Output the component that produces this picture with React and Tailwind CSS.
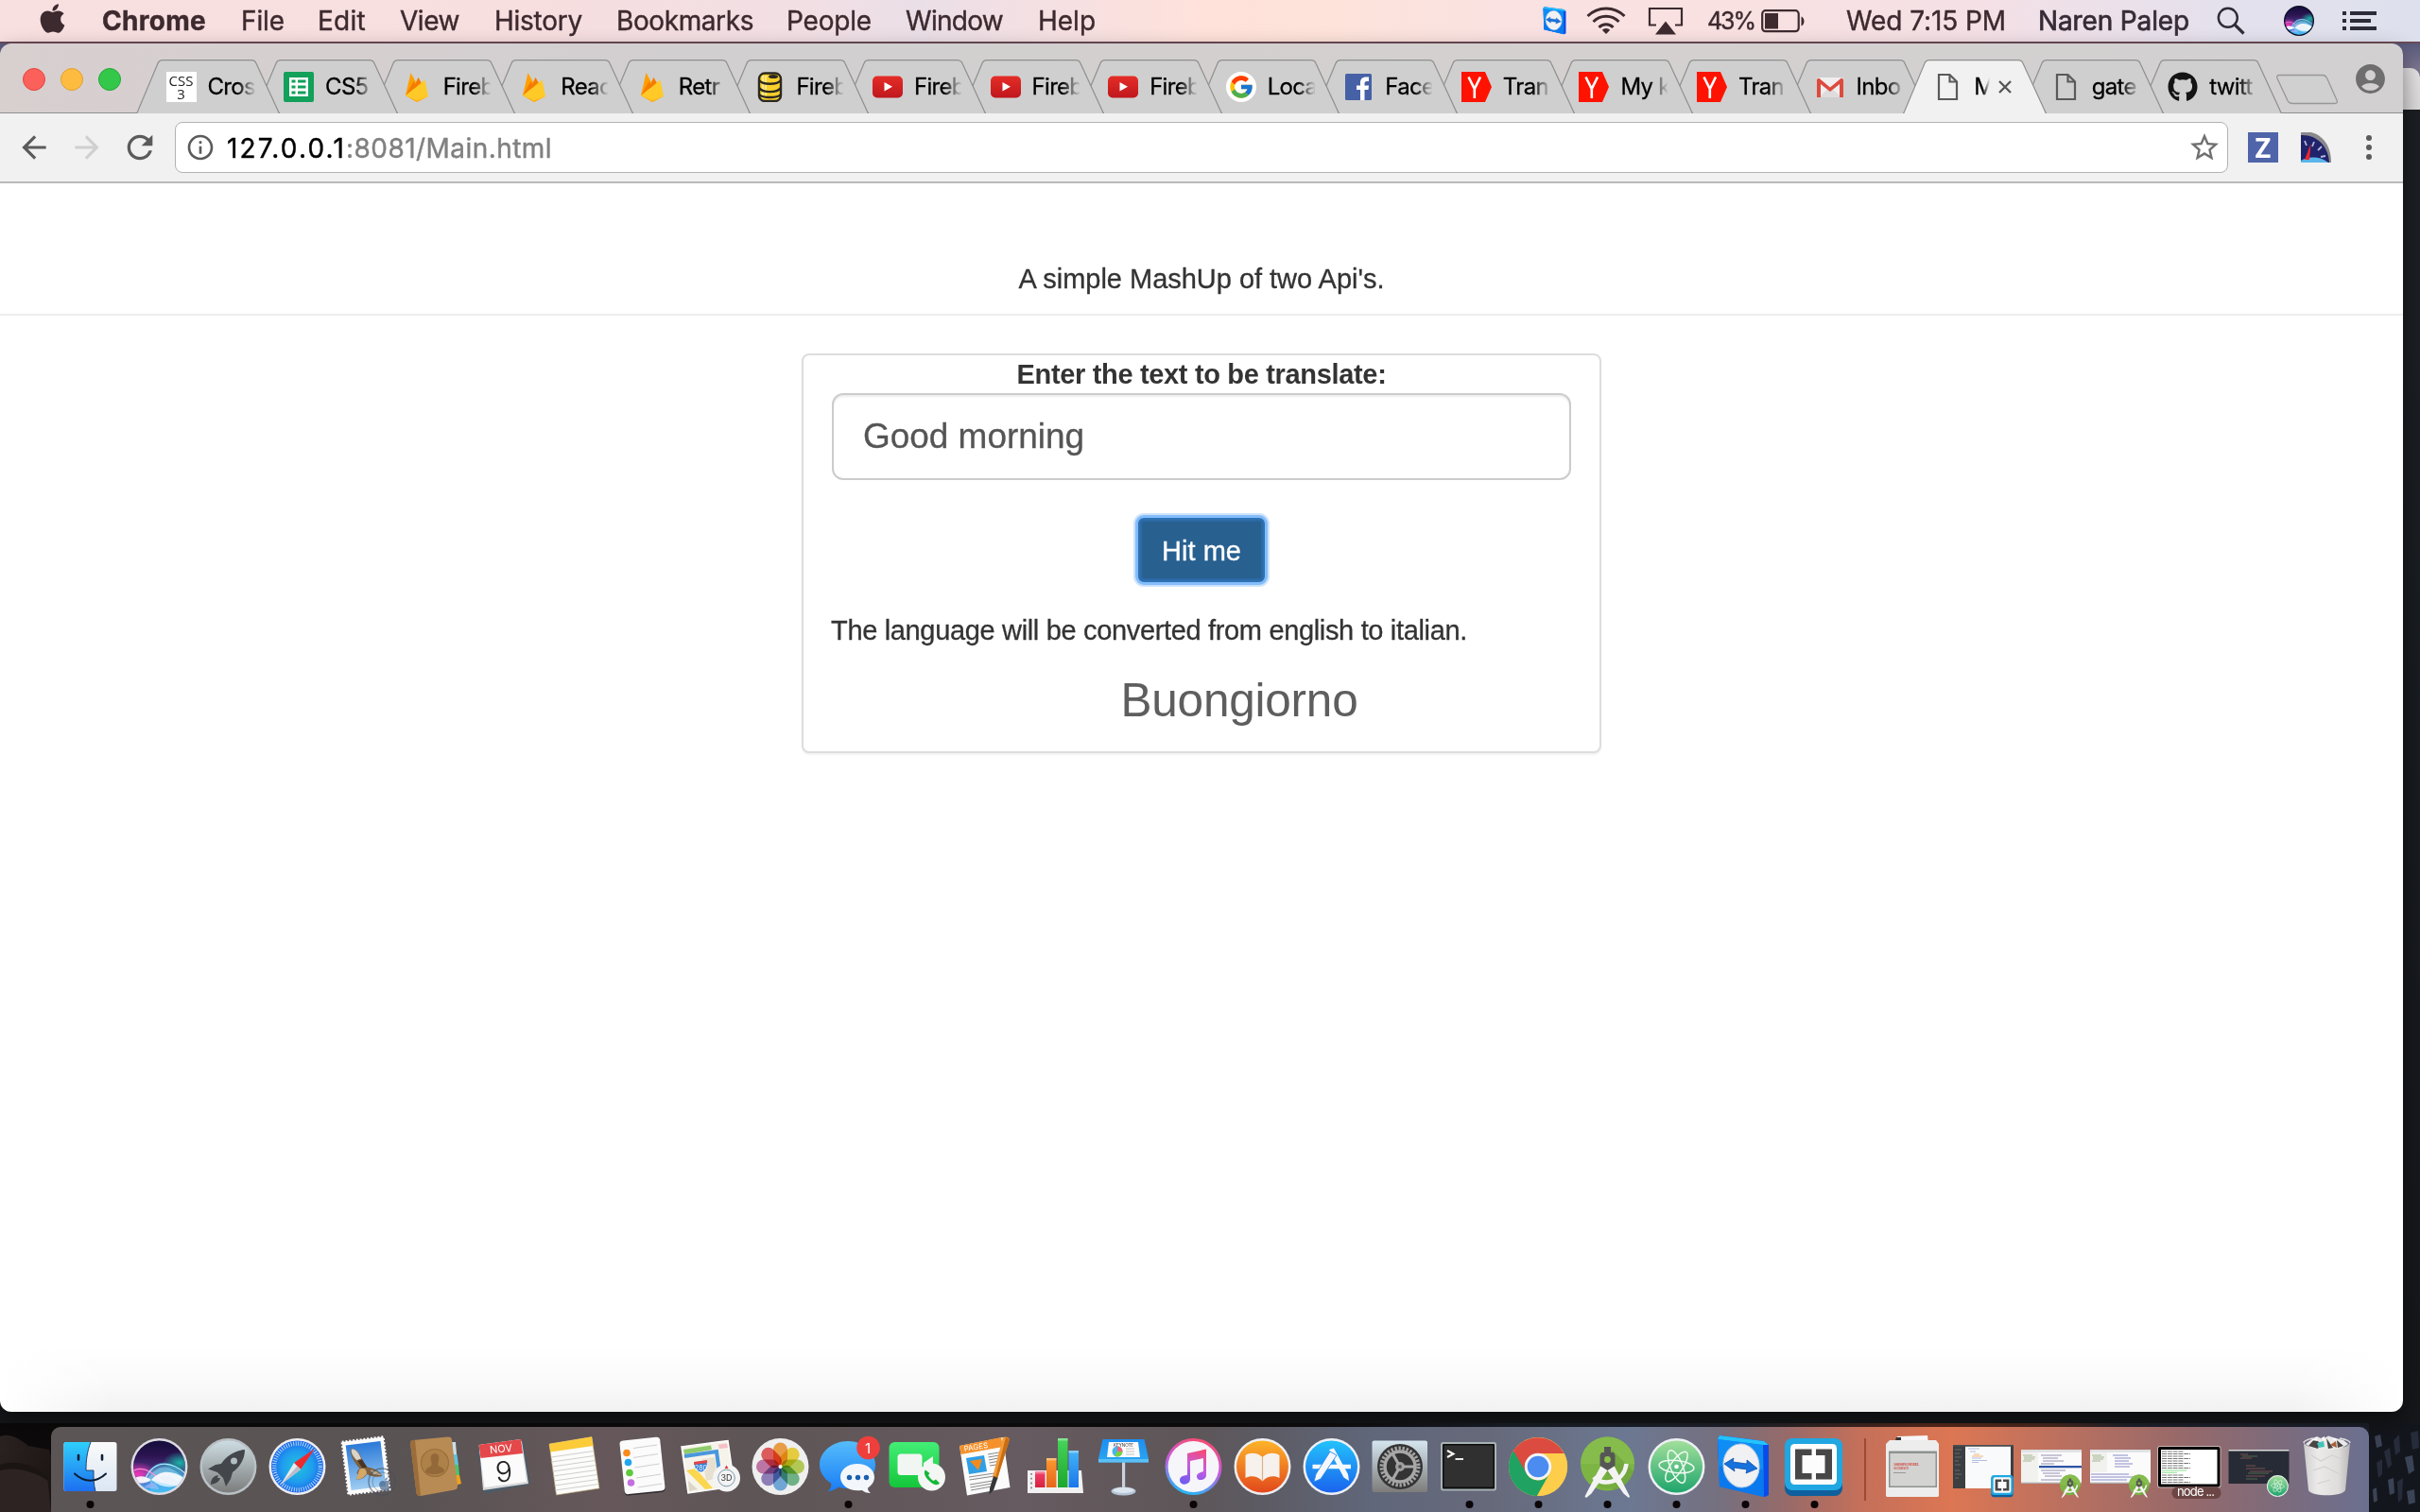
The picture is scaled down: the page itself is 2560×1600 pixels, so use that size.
import React, { useLayoutEffect, useRef } from "react";
import { FaApple, FaGithub } from "react-icons/fa";
import { FcGoogle } from "react-icons/fc";
import { MdAccountCircle, MdStarBorder, MdRefresh, MdArrowBack, MdArrowForward, MdInfoOutline } from "react-icons/md";

/* Text that is tracked so that it fills the given width. */
function Fit({ w, className = "", children }) {
  const ref = useRef(null);
  useLayoutEffect(() => {
    const el = ref.current;
    el.style.letterSpacing = "0px";
    const natural = el.getBoundingClientRect().width;
    el.style.letterSpacing = `${(w - natural) / String(children).length}px`;
  }, [w, children]);
  return (
    <span ref={ref} className={`inline-block shrink-0 whitespace-pre ${className}`}>
      {children}
    </span>
  );
}

/* ---------- menu bar ---------- */

const menus = [
  ["File", 46, "ml-[37px]"],
  ["Edit", 51, "ml-[35px]"],
  ["View", 63, "ml-[36px]"],
  ["History", 93, "ml-[37px]"],
  ["Bookmarks", 145, "ml-[36px]"],
  ["People", 90, "ml-[35px]"],
  ["Window", 103, "ml-[36px]"],
  ["Help", 61, "ml-[37px]"],
];

function TeamViewerShape() {
  return (
    <g>
      <path d="M7 13 L9 9 L56 15 L61 19 L61 72 L57 74 L9 63 Z" fill="#0a4be8" />
      <path d="M7 13 L55 19 L56 74 L9 63 Z" fill="#0f8df5" />
      <path d="M7 13 L9 9 L56 15 L61 19 L55 19 Z" fill="#22c3ff" />
      <path d="M9 42 C25 36 40 40 56 46 L56 74 L9 63 Z" fill="#0a6ae8" opacity="0.55" />
      <ellipse cx="32" cy="41" rx="19" ry="23" fill="#f1f1f4" stroke="#bcd" strokeWidth="1" transform="rotate(-6 32 41)" />
      <path d="M14 39 L24 33 L23 37 L38 39 L38 35 L49 44 L37 49 L38 45 L24 43 L25 47 Z" fill="#1672dc" stroke="#0b4fae" strokeWidth="0.8" />
    </g>
  );
}

function SiriOrb({ id }) {
  return (
    <g>
      <defs>
        <linearGradient id={`${id}bg`} x1="0" y1="0" x2="0" y2="1">
          <stop offset="0" stopColor="#140d3a" />
          <stop offset="0.3" stopColor="#2c1552" />
          <stop offset="0.55" stopColor="#4a2f7e" />
          <stop offset="0.75" stopColor="#3f7fd0" />
          <stop offset="1" stopColor="#2fb0ee" />
        </linearGradient>
        <radialGradient id={`${id}p`}>
          <stop offset="0" stopColor="#f531b4" />
          <stop offset="1" stopColor="#f531b4" stopOpacity="0" />
        </radialGradient>
        <radialGradient id={`${id}t`}>
          <stop offset="0" stopColor="#19b3a6" />
          <stop offset="1" stopColor="#19b3a6" stopOpacity="0" />
        </radialGradient>
        <clipPath id={`${id}c`}>
          <circle cx="36.5" cy="42" r="27.5" />
        </clipPath>
      </defs>
      <circle cx="36.5" cy="42" r="27.5" fill={`url(#${id}bg)`} />
      <g clipPath={`url(#${id}c)`}>
        <ellipse cx="58" cy="38" rx="18" ry="12" fill={`url(#${id}t)`} />
        <ellipse cx="14" cy="50" rx="20" ry="13" fill={`url(#${id}p)`} />
        <path d="M20 56 C30 32 50 32 66 54 L66 60 C50 44 34 44 24 60 Z" fill="#4fd4f5" opacity="0.45" />
        <path d="M24 56 C34 38 48 38 64 56 L60 62 C48 48 36 50 28 60 Z" fill="#8be6fb" opacity="0.5" />
        <path d="M8 47 C18 40 30 48 40 58" stroke="#ff8fd6" strokeWidth="1.2" fill="none" />
        <path d="M22 54 C32 34 50 36 65 50" stroke="#a8f4ff" strokeWidth="1.2" fill="none" />
        <path d="M8 56 C14 50 22 52 28 56 C38 44 52 46 66 56 C54 66 40 66 28 56 C22 60 14 61 8 56 Z" fill="#fff" opacity="0.9" />
        <path d="M20 64 C28 58 32 56 36 66 Z" fill="#c9b4ff" opacity="0.6" />
        <path d="M28 56 C40 60 50 62 60 62 L50 72 H26 Z" fill="#6fd8ff" opacity="0.35" />
      </g>
    </g>
  );
}

function MenuBar() {
  return (
    <header className="flex h-[46px] items-start border-b-2 border-[#6b4b56] bg-[linear-gradient(90deg,#f8dfe0_0%,#f7dedf_22%,#f2dfe4_33%,#ebdfe7_38%,#f6e0e2_44%,#ffe2da_50%,#fde3da_55%,#f9e2e1_62%,#f9e1e1_72%,#f4e0e6_82%,#e4e1ed_92%,#dde1ed_100%)] text-[28px] leading-[44px] text-[#3d2a2f] [-webkit-text-stroke:0.4px]">
      <FaApple className="mt-[2px] ml-[38px] h-[35px] w-[35px] shrink-0" />
      <Fit w={110} className="ml-[35px] font-bold">Chrome</Fit>
      {menus.map(([name, w, ml]) => (
        <Fit key={name} w={w} className={ml}>{name}</Fit>
      ))}
      <div className="ml-auto flex h-[44px] items-center">
        <svg className="h-[32px] w-[27px]" viewBox="4 6 60 72"><TeamViewerShape /></svg>
        <svg className="ml-[20px] h-[32px] w-[42px]" viewBox="0 0 42 32" fill="none" stroke="#3d2a2f" strokeWidth="3">
          <path d="M1.5 11 A27.5 27.5 0 0 1 40.5 11" />
          <path d="M7.5 17 A19 19 0 0 1 34.5 17" />
          <path d="M13.5 23 A10.5 10.5 0 0 1 28.5 23" />
          <path d="M21 30 L16.8 25.7 A6 6 0 0 1 25.2 25.7 Z" fill="#3d2a2f" stroke="none" />
        </svg>
        <svg className="ml-[23px] h-[30px] w-[38px]" viewBox="0 0 38 30">
          <path d="M9 19.5 H2 V2 H36 V19.5 H29" fill="none" stroke="#3d2a2f" strokeWidth="2.2" />
          <path d="M19 15.5 L30 29.5 H8 Z" fill="#3d2a2f" />
        </svg>
        <Fit w={50} className="ml-[25px] text-[25px]">43%</Fit>
        <svg className="ml-[7px] h-[26px] w-[47px]" viewBox="0 0 47 26">
          <rect x="1.2" y="2.2" width="38.5" height="22" rx="3.5" fill="none" stroke="#3d2a2f" strokeWidth="2.2" />
          <rect x="4" y="5" width="14" height="16.5" fill="#3d2a2f" />
          <path d="M42.5 8.5 C46.500 10 46.500 17 42.500 18.500 Z" fill="#3d2a2f" />
        </svg>
        <Fit w={169} className="ml-[43px]">Wed 7:15 PM</Fit>
        <Fit w={160} className="ml-[34px] text-[#362c37] [-webkit-text-stroke:0.7px]">Naren Palep</Fit>
        <svg className="ml-[29px] h-[30px] w-[30px]" viewBox="0 0 30 30" fill="none" stroke="#2f2c38">
          <circle cx="11.8" cy="11.8" r="10" strokeWidth="2.4" />
          <path d="M18.8 18.8 L28.5 28.5" strokeWidth="3.2" />
        </svg>
        <svg className="ml-[41px] h-[32px] w-[32px]" viewBox="6.5 12 60 60">
          <circle cx="36.5" cy="42" r="30" fill="#0a0f24" />
          <SiriOrb id="ms" />
        </svg>
        <svg className="mr-[46px] ml-[30px] h-[20px] w-[36px]" viewBox="0 0 36 20" fill="#2c2b39">
          <path d="M0 0h4v4H0zM0 8h4v4H0zM0 16h4v4H0zM8 0h28v4H8zM8 8h22v4H8zM8 16h28v4H8z" />
        </svg>
      </div>
    </header>
  );
}

/* ---------- favicons ---------- */

const box = "h-[32px] w-[32px] shrink-0";

function CssIcon() {
  return (
    <div className="flex h-[32px] w-[32px] shrink-0 flex-col items-center justify-center bg-white font-['Open_Sans'] text-[15px] leading-[14px] text-[#222]">
      <span>CSS</span>
      <span>3</span>
    </div>
  );
}
function SheetIcon() {
  return (
    <svg className={box} viewBox="0 0 32 32">
      <rect width="32" height="32" rx="2" fill="#12a05a" />
      <path d="M6 6h20v20H6z" fill="#fff" />
      <path d="M8.5 8.5h4v3h-4zM15 8.5h8.5v3H15zM8.5 14.5h4v3h-4zM15 14.5h8.5v3H15zM8.5 20.5h4v3h-4zM15 20.5h8.5v3H15z" fill="#12a05a" />
    </svg>
  );
}
function FireIcon() {
  return (
    <svg className={box} viewBox="0 0 32 32">
      <path d="M4 25 L9.5 1 L15 11 L17.5 6 L21 12 L8 26 Z" fill="#ffa000" />
      <path d="M4 25 L12.5 10 L17 17 Z" fill="#f57c00" />
      <path d="M4 25 L24.5 8.5 L28 26 L16 32 Z" fill="#ffca28" />
      <path d="M4 25 L16 32 L28 26 L16 30.5 Z" fill="#ffa712" />
      <path d="M17.5 6 L20.5 11.8 L12 18.5 Z" fill="#f57c00" />
    </svg>
  );
}
function DbIcon() {
  return (
    <svg className={box} viewBox="0 0 32 32">
      <rect x="5" y="1.5" width="23" height="29.5" rx="6" fill="#f9cf2c" stroke="#2b2920" strokeWidth="2.4" />
      <path d="M9 4v24M12 4v24" stroke="#fde98a" strokeWidth="2" />
      <path d="M5 9 C9 14 24 14 28 9 M5 17 C9 22.5 24 22.5 28 17 M5 24 C9 28 24 28 28 24" fill="none" stroke="#2b2920" strokeWidth="2.4" />
      <ellipse cx="20" cy="5" rx="5" ry="2" fill="#2b2920" />
    </svg>
  );
}
function YtIcon() {
  return (
    <svg className={box} viewBox="0 0 32 32">
      <defs>
        <linearGradient id="ytg" x1="0" y1="0" x2="0" y2="1">
          <stop offset="0" stopColor="#e52d27" />
          <stop offset="1" stopColor="#bf171d" />
        </linearGradient>
      </defs>
      <rect x="0" y="4.5" width="32" height="23" rx="5" fill="url(#ytg)" />
      <path d="M12.5 11 L21 15.7 L12.5 20.5 Z" fill="#fff" />
    </svg>
  );
}
function GoogleIcon() {
  return (
    <div className="flex h-[32px] w-[32px] shrink-0 items-center justify-center rounded-full bg-white">
      <FcGoogle className="h-[28px] w-[28px]" />
    </div>
  );
}
function FbIcon() {
  return (
    <svg className={box} viewBox="0 0 32 32">
      <rect x="2" y="2" width="28" height="28" rx="1.5" fill="#4661a5" />
      <path d="M18 30 V19 H14 V14.5 H18 V11.5 C18 7.5 20.5 5.5 24 5.5 H27 V10 H25 C23 10 22.5 11 22.5 12.5 V14.5 H27 L26.5 19 H22.5 V30 Z" fill="#fff" />
    </svg>
  );
}
function YIcon() {
  return (
    <svg className={box} viewBox="0 0 32 32">
      <path d="M0 0 H25 L32 16 L25 32 H0 Z" fill="#ff1300" />
      <path d="M7.5 5.5 L13.8 18 L20 5.5 M13.8 17 V28" stroke="#fff" strokeWidth="2.6" fill="none" />
    </svg>
  );
}
function GmailIcon() {
  return (
    <svg className={box} viewBox="0 0 32 32">
      <rect x="2" y="6" width="28" height="21" rx="1.5" fill="#f0eeee" />
      <path d="M4 27 L16 16 L28 27 Z" fill="#dedcdc" />
      <path d="M2 27 V8 L4 6.5 L16 16.5 L28 6.5 L30 8 V27 H26 V13 L16 21 L6 13 V27 Z" fill="#dd4b3e" />
    </svg>
  );
}
function FileIcon() {
  return (
    <svg className={box} viewBox="0 0 32 32" fill="none" stroke="#5a5a5a" strokeWidth="2.2">
      <path d="M7 3 H18.5 L26 10.5 V29 H7 Z" />
      <path d="M18.5 3 V10.5 H26" />
    </svg>
  );
}
function HubIcon() {
  return <FaGithub className="h-[32px] w-[32px] shrink-0 text-[#141414]" />;
}

const tabs = [
  [CssIcon, "Cross"],
  [SheetIcon, "CS5"],
  [FireIcon, "Fireb"],
  [FireIcon, "Reac"],
  [FireIcon, "Retr"],
  [DbIcon, "Fireb"],
  [YtIcon, "Fireb"],
  [YtIcon, "Fireb"],
  [YtIcon, "Fireb"],
  [GoogleIcon, "Loca"],
  [FbIcon, "Face"],
  [YIcon, "Tran"],
  [YIcon, "My k"],
  [YIcon, "Tran"],
  [GmailIcon, "Inbo"],
  [FileIcon, "M", true],
  [FileIcon, "gate"],
  [HubIcon, "twitt"],
];

function Tab({ Icon, title, active, z }) {
  return (
    <div className="relative mr-[-27.43px] h-[57px] w-[152px] shrink-0" style={{ zIndex: z }}>
      <svg className="absolute inset-0 h-[57px] w-[152px]" viewBox="0 0 152 57">
        <path
          d="M0 57 C1.5 56.5 1.5 55 2 54 L23 4 C24 1.5 25 0.7 28 0.7 H122 C125 0.7 126 1.5 127 4 L150 54 C150.5 55.5 151 56.5 152 57"
          fill={active ? "#f1f1f1" : "#cfcfcf"}
          stroke="#8f8f8f"
          strokeWidth="1.2"
        />
      </svg>
      <div className="relative flex h-[57px] items-center pl-[31.5px]">
        <Icon />
        <span
          className={`ml-[12px] overflow-hidden text-[24px] leading-[34px] tracking-[-0.7px] whitespace-nowrap text-black [-webkit-text-stroke:0.3px] ${
            active
              ? "w-[17px] [mask-image:linear-gradient(90deg,#000_55%,transparent_100%)]"
              : "w-[50px] [mask-image:linear-gradient(90deg,#000_62%,transparent_102%)]"
          }`}
        >
          {title}
        </span>
        {active && (
          <svg className="ml-[9px] h-[14px] w-[14px]" viewBox="0 0 14 14" stroke="#555" strokeWidth="2.3">
            <path d="M1 1 L13 13 M13 1 L1 13" />
          </svg>
        )}
      </div>
    </div>
  );
}

function TabStrip() {
  return (
    <div className="flex h-[74px] items-end rounded-t-[12px] bg-[linear-gradient(90deg,#d8cfcf_0%,#d6cfd0_10%,#d1cfd0_35%,#d3cfce_50%,#d5d0d0_60%,#d2d0d1_100%)] shadow-[inset_0_-1px_0_#8f8f8f]">
      <div className="flex w-[144px] shrink-0 gap-[16px] self-center pt-[2px] pl-[24px]">
        <i className="h-[24px] w-[24px] rounded-full border border-[#e2463f] bg-[#fc605b]" />
        <i className="h-[24px] w-[24px] rounded-full border border-[#e0a030] bg-[#fdbc40]" />
        <i className="h-[24px] w-[24px] rounded-full border border-[#24a737] bg-[#34c84a]" />
      </div>
      <div className="isolate flex">
        {tabs.map(([Icon, title, active], i) => (
          <Tab key={i} Icon={Icon} title={title} active={active} z={active ? 50 : 30 - i} />
        ))}
      </div>
      <svg className="mb-[8px] ml-[21px] h-[34px] w-[67px] shrink-0" viewBox="0 0 67 34">
        <path d="M4 1.5 H50 C52.5 1.5 53.5 2.5 54.5 4.5 L65 28 C66 30.5 65 31.5 63 31.5 H18 C15.5 31.5 14 30.5 13 28.5 L2 5 C1 2.5 2 1.5 4 1.5 Z" fill="#d0d0d0" stroke="#979797" strokeWidth="1.3" />
      </svg>
      <MdAccountCircle className="mr-[16px] ml-auto h-[37px] w-[37px] self-center text-[#6e6e6e]" />
    </div>
  );
}

function Toolbar() {
  return (
    <div className="flex h-[74px] items-center border-b-2 border-[#b9b9b9] bg-[#f1f1f1]">
      <MdArrowBack className="ml-[17px] h-[38px] w-[38px] shrink-0 text-[#5b5b5b]" />
      <MdArrowForward className="ml-[18px] h-[38px] w-[38px] shrink-0 text-[#d0d0d0]" />
      <MdRefresh className="ml-[17px] h-[40px] w-[40px] shrink-0 text-[#5b5b5b]" />
      <div className="ml-[17px] flex h-[54px] w-[2172px] shrink-0 items-center rounded-[8px] border border-[#b2b2b2] bg-white text-[28px] leading-[40px]">
        <MdInfoOutline className="ml-[10px] h-[32px] w-[32px] shrink-0 text-[#5b5b5b]" />
        <Fit w={126} className="mt-[2px] ml-[12px] text-black [-webkit-text-stroke:0.4px]">127.0.0.1</Fit>
        <Fit w={218} className="mt-[2px] text-[#808080] [-webkit-text-stroke:0.4px]">:8081/Main.html</Fit>
        <MdStarBorder className="mr-[6px] ml-auto h-[36px] w-[36px] text-[#707070]" />
      </div>
      <div className="ml-[21px] flex h-[32px] w-[32px] items-center justify-center bg-[#4f64a9] font-['Open_Sans'] text-[29px] leading-[32px] font-bold text-white">Z</div>
      <svg className="ml-[24px] h-[32px] w-[32px]" viewBox="0 0 32 32">
        <path d="M0 0 H11 C23 3 32 14 32 32 H0 Z" fill="#8a8a8c" />
        <path d="M0 3 C16 2 29 14 30 32 H0 Z" fill="#20236b" />
        <path d="M0 30 C8 25 20 25 29 32 H0 Z" fill="#5bb4ea" />
        <path d="M4 9 L6 14 M14 10 L12 15 M22 15 L18 19 M26 25 L21 26" stroke="#b4b8dc" strokeWidth="1.8" />
        <path d="M10.5 12 L9 29 L4 29 Z" fill="#f0252b" />
      </svg>
      <svg className="ml-[37px] h-[28px] w-[6px]" viewBox="0 0 6 28" fill="#5b5b5b">
        <circle cx="3" cy="4" r="3" />
        <circle cx="3" cy="14" r="3" />
        <circle cx="3" cy="24" r="3" />
      </svg>
    </div>
  );
}

/* ---------- page ---------- */

function Page() {
  return (
    <main className="flex h-[1300px] flex-col items-center rounded-b-[12px] bg-[linear-gradient(90deg,#fff_0,transparent_120px,transparent_calc(100%-120px),#fff_100%),linear-gradient(180deg,#fff_0,#fff_1230px,#fafafa_1270px,#f1f1f1_1300px)] font-['Liberation_Sans',sans-serif] text-[29px] leading-[40px] text-[#333] [-webkit-text-stroke:0.3px]">
      <p className="mt-[81px] h-[40px]">
        <Fit w={387}>A simple MashUp of two Api's.</Fit>
      </p>
      <hr className="mt-[17px] w-full border-t-2 border-[#eee]" />
      <section className="mt-[40px] h-[423px] w-[846px] rounded-[8px] border-2 border-[#ddd] bg-white px-[30px] shadow-[0_2px_2px_rgba(0,0,0,0.05)]">
        <div className="flex h-[40px] justify-center font-bold [-webkit-text-stroke:0px]">
          <Fit w={391}>Enter the text to be translate:</Fit>
        </div>
        <div className="flex h-[92px] items-center rounded-[12px] border-2 border-[#ccc] px-[31px] text-[37px] text-[#555] shadow-[inset_0_2px_2px_rgba(0,0,0,0.075)]">
          <Fit w={234}>Good morning</Fit>
        </div>
        <button className="mx-auto mt-[40px] flex h-[68px] w-[134px] items-center justify-center rounded-[6px] border-2 border-[#2e72b5] bg-[#286090] text-white shadow-[0_0_0_3px_#83bdfb,0_0_0_5px_#cfe4fb,inset_0_0_0_2px_#2c6aa6]">
          <Fit w={84} className="mt-[1px]">Hit me</Fit>
        </button>
        <p className="mt-[31px] -ml-px h-[40px]">
          <Fit w={673}>The language will be converted from english to italian.</Fit>
        </p>
        <p className="mt-[20px] pl-[80px] text-center text-[49.5px] leading-[68px] text-[#5e5e5e] [-webkit-text-stroke:0px]">
          <Fit w={251}>Buongiorno</Fit>
        </p>
      </section>
    </main>
  );
}

/* ---------- dock ---------- */

function Grad({ id, from, to }) {
  return (
    <linearGradient id={id} x1="0" y1="0" x2="0" y2="1">
      <stop offset="0" stopColor={from} />
      <stop offset="1" stopColor={to} />
    </linearGradient>
  );
}

function Disc({ id, from, to, rim = "#eef0f4", children }) {
  return (
    <g>
      <defs><Grad id={id} from={from} to={to} /></defs>
      <circle cx="36.5" cy="42" r="30" fill={rim} />
      <circle cx="36.5" cy="42" r="27.5" fill={`url(#${id})`} />
      {children}
    </g>
  );
}

function Finder() {
  return (
    <g>
      <defs>
        <Grad id="fa" from="#2fd0fb" to="#1e6ff0" />
        <Grad id="fb" from="#fafafa" to="#dbe6f3" />
      </defs>
      <rect x="8.5" y="16" width="56" height="52" rx="2.5" fill="url(#fb)" />
      <path d="M11 16 H37 C33 26 32 36 32 46 H40 C40 54 40 61 42 68 H11 C9 68 8.5 67 8.5 65.5 V18.5 C8.5 17 9 16 11 16 Z" fill="url(#fa)" />
      <path d="M37 16 C33 26 32 36 32 46 H40 C40 54 40 61 42 68" fill="none" stroke="#1a3a60" strokeWidth="0.9" />
      <path d="M24 30 V34.5 M49 30 V34.5" stroke="#0c1d33" strokeWidth="2.6" strokeLinecap="round" />
      <path d="M20 49.5 C30 59 43 59 53 49.5" fill="none" stroke="#0c1d33" strokeWidth="2" strokeLinecap="round" />
    </g>
  );
}
function Siri() {
  return (
    <g>
      <circle cx="36.5" cy="42" r="30" fill="#dcdce2" />
      <SiriOrb id="ds" />
    </g>
  );
}
function Launchpad() {
  return (
    <Disc id="lp" from="#cddde3" to="#7c7d7c" rim="#b9c1c5">
      <path d="M54 24 C43 25 34 31 29 39 L23 40 L15 44.500 L25 48 L31 54 L34 63 L39 55 L41 48 C49 42 54 34 54 24 Z" fill="#43474b" />
      <circle cx="42.5" cy="36" r="3.5" fill="#b3bec4" />
      <path d="M26 51 C20 52 18 56 18 61 C23 60 27 58 28 54 L25 54 Z" fill="#43474b" />
    </Disc>
  );
}
function Safari() {
  return (
    <g>
      <defs>
        <radialGradient id="sf">
          <stop offset="0" stopColor="#22c4dc" />
          <stop offset="0.6" stopColor="#1f9cee" />
          <stop offset="1" stopColor="#1b66e8" />
        </radialGradient>
      </defs>
      <circle cx="36.5" cy="42" r="30" fill="#eeeef2" />
      <circle cx="36.5" cy="42" r="27.5" fill="url(#sf)" />
      <circle cx="36.5" cy="42" r="24.5" fill="none" stroke="#dff1ff" strokeWidth="4.5" strokeDasharray="0.9 1.666" opacity="0.85" />
      <path d="M55 23 L40 45 L33 38 Z" fill="#ef2a2f" />
      <path d="M19 61 L33 38 L40 45 Z" fill="#e8eaee" />
      <path d="M19 61 L36.5 41.5 L40 45 Z" fill="#b9bdc8" />
    </g>
  );
}
function Mail() {
  return (
    <g>
      <g transform="rotate(-7 36 41)">
        <rect x="14" y="13" width="44" height="56" fill="#fbfbfb" stroke="#fbfbfb" strokeWidth="2.4" strokeDasharray="2 1.8" />
        <defs><Grad id="ml" from="#2a79d8" to="#9fcdf2" /></defs>
        <rect x="17.5" y="17" width="37" height="48" fill="url(#ml)" />
        <path d="M22 22 C27 20 31 26 33 34 C35 38 36 41 38 43 C44 44 50 49 52 54 C46 55 40 53 36 50 C33 54 29 55 24 54 L27 50 C24 48 27 45 29 43 C25 37 21 30 22 22 Z" fill="#7d6242" />
        <path d="M23 22 C27 21 30 26 32 33 L27 34 C24 30 22 26 23 22 Z" fill="#d9d3c8" />
        <path d="M29 44 C33 42 36 44 36 49 C33 53 29 55 24 54 Z" fill="#d4a868" />
        <path d="M40 46 C45 47 49 50 51 53 L43 51 Z" fill="#b8ab98" />
        <path d="M28 35 L33 34 L37 43 L32 43 Z" fill="#4a3420" />
      </g>
      <circle cx="53" cy="58" r="14" fill="none" stroke="#48505c" strokeWidth="1.4" opacity="0.6" />
      <circle cx="53" cy="58" r="10" fill="none" stroke="#48505c" strokeWidth="1" opacity="0.4" />
      <FaApple x="48" y="52.500" width="10" height="11" color="#3a5a80" opacity="0.65" />
    </g>
  );
}
function Contacts() {
  return (
    <g>
      <path d="M54 16 L58 16 L59 29 L55 29 Z" fill="#c9dfe8" />
      <path d="M55 29 L59.500 29 L61 40 L56 41 Z" fill="#5fc4dd" />
      <path d="M56 40 L61 40 L62 51 L57 52 Z" fill="#50c36a" />
      <path d="M57 51 L62 51 L64 60 L57 62 Z" fill="#f0a21c" />
      <path d="M10 17 C10 15 11 14.5 13 14 L50 10.5 C53 10.5 54 12 54 14 L60 62 C60 65 59 66 57 66.5 L21 73 C18 73 17 72 16.5 70 Z" fill="#b88b54" />
      <path d="M10 17 C10 15 11 14.5 13 14 L15 14 L21 73 C18 73 17 72 16.5 70 Z" fill="#9a6d3a" />
      <circle cx="36" cy="38" r="14.5" fill="#ae8149" stroke="#9a7039" strokeWidth="1.200" />
      <path d="M36 28 C40 28 41 32 40 36 C39 39 39 41 41 42 C45 43 46 45 46 47 C41 51 31 51 26 48 C26 45 28 43 31 42 C33 41 33 39 32 36 C31 32 32 28 36 28 Z" fill="#94693a" />
    </g>
  );
}
function CalendarIcon() {
  return (
    <g>
      <path d="M8 21 L14 18 L57 15 L64 61 L15 71 Z" fill="#4c5b66" />
      <path d="M10 21 L55 15 L62 60 L14 67 Z" fill="#d9d9dc" />
      <path d="M9.5 19 L54 13 L60 58 L15.5 64 Z" fill="#fbfbfb" />
      <path d="M9.5 19 L54 13 L56 28 L11.5 33 Z" fill="#e4484a" />
      <text x="33" y="27" fontSize="11" fill="#fff" textAnchor="middle" transform="rotate(-6 33 24)" fontFamily="Inter, sans-serif">NOV</text>
      <text x="36" y="58" fontSize="30" fill="#222" fontWeight="300" textAnchor="middle" transform="rotate(-5 36 47)" fontFamily="Inter, sans-serif">9</text>
    </g>
  );
}
function Notes() {
  return (
    <g>
      <path d="M11 18 L56 10.5 L64 65 L18.5 72 Z" fill="#fcfcfa" stroke="#b9a56a" strokeWidth="0.6" />
      <path d="M11 18 L56 10.5 L57.5 20 L12.3 26.5 Z" fill="#fbcb3a" />
      <path d="M13 32 L58 25.5 M13.6 37 L58.8 30.5 M14.2 42 L59.5 35.5 M14.8 47 L60.2 40.5 M15.4 52 L61 45.5 M16 57 L61.7 50.5 M16.7 62 L62.4 55.5 M17.4 67 L63.1 60.5" stroke="#cfcfcf" strokeWidth="1" />
    </g>
  );
}
function Reminders() {
  return (
    <g>
      <rect x="15" y="14" width="43" height="57" rx="4" fill="#2c2a2d" transform="rotate(-6 36 41)" />
      <rect x="15" y="12.5" width="43" height="57" rx="4" fill="#fbfbfb" transform="rotate(-6 36 41)" />
      <circle cx="20" cy="27.5" r="3.8" fill="#fb8b1d" />
      <circle cx="21.5" cy="37.5" r="3.8" fill="#22a6ef" />
      <circle cx="23" cy="48.5" r="3.8" fill="#5dcb3c" />
      <circle cx="24.5" cy="59" r="3.8" fill="#c36fe0" />
      <path d="M27 22.5 L52 19 M27 32.5 L53 28.5 M28.5 43 L54.5 39 M30 54 L56 50 M31.5 64 L57.5 60" stroke="#c9c9c9" strokeWidth="0.9" />
    </g>
  );
}
function Maps() {
  return (
    <g>
      <path d="M5 21 L54 14.5 L61 63 L12 70 Z" fill="#f6f3ea" stroke="#fff" strokeWidth="1.5" />
      <path d="M7 24 L36 19.5 L37 24 L8 29 Z" fill="#8ecb6a" />
      <path d="M44 18.5 L53 17.5 L54 22 L45 23 Z" fill="#f5c0c8" />
      <path d="M8 31 L42 26 L45 48" fill="none" stroke="#4a97dc" strokeWidth="4" />
      <path d="M10 46 L30 66 L38 65 L20 44 Z" fill="#fbd64f" />
      <path d="M27 34 L40 32 L43 54 L31 57 Z" fill="#e7dfcf" />
      <path d="M12 57 L22 66 L13 68 Z" fill="#ddd6c6" />
      <path d="M18 37 L32 35 C33 42 31 46 26 48 C20 47 18 43 18 37 Z" fill="#2f7fd8" stroke="#fff" strokeWidth="0.8" />
      <path d="M18 37 L32 35 L32.2 38 L18 40 Z" fill="#e0474b" />
      <text x="25.5" y="45.5" fontSize="7" fill="#fff" textAnchor="middle" fontFamily="Inter, sans-serif">280</text>
      <circle cx="52.5" cy="54" r="14.5" fill="#f4f4f5" />
      <circle cx="52.5" cy="54" r="8.8" fill="none" stroke="#7c98a8" strokeWidth="1" />
      <path d="M52.5 40.5 L54.5 44 H50.5 Z" fill="#e03a36" />
      <text x="52.5" y="57.3" fontSize="9" fill="#333" textAnchor="middle" fontFamily="Inter, sans-serif">3D</text>
    </g>
  );
}
function Photos() {
  const petals = ["#f7982c", "#f3d324", "#b3cf3f", "#5fb27a", "#63a3dc", "#8572b8", "#c1679f", "#e8484a"];
  return (
    <g>
      <circle cx="36.5" cy="42" r="30" fill="#efeff0" />
      {petals.map((c, i) => (
        <rect key={c} x="29" y="16.5" width="15" height="24.5" rx="7.5" fill={c} opacity="0.86" transform={`rotate(${i * 45} 36.5 42)`} className="mix-blend-multiply" />
      ))}
      <circle cx="36.5" cy="42" r="2" fill="#fff" />
    </g>
  );
}
function Messages() {
  return (
    <g>
      <defs><Grad id="mg" from="#55bdfb" to="#1a7df5" /></defs>
      <path d="M36 15 C52 15 65 26 65 40 C65 54 52 65 36 65 C32 65 29 64.5 26 63.5 C23 66 20 67.5 15 68 C18 65 19 62 18 59.5 C11 55 6 48 6 40 C6 26 20 15 36 15 Z" fill="url(#mg)" />
      <path d="M46 39 C56 39 64 45 64 53 C64 58 61 62 57 64.5 C57 67 58 68.5 60 70 C56 70 53 69 51 67 C38 69 28 62 28 53 C28 45 36 39 46 39 Z" fill="#f3f7fc" />
      <circle cx="37.5" cy="53.5" r="2.7" fill="#1b5fb0" />
      <circle cx="46.5" cy="53.5" r="2.7" fill="#1b5fb0" />
      <circle cx="55.5" cy="53.5" r="2.7" fill="#1b5fb0" />
      <circle cx="57.5" cy="22" r="12.3" fill="#ee3f3c" />
      <text x="57" y="27.5" fontSize="15" fill="#fff" textAnchor="middle" fontFamily="Inter, sans-serif">1</text>
    </g>
  );
}
function FaceTime() {
  return (
    <g>
      <defs><Grad id="ft" from="#43ee76" to="#14c63a" /></defs>
      <rect x="6.5" y="16" width="53" height="48" rx="6" fill="url(#ft)" />
      <rect x="15.5" y="28.5" width="26" height="22.5" rx="3.5" fill="#f2f6f2" />
      <path d="M43 38 L53 31 V48 L43 43 Z" fill="#f2f6f2" />
      <circle cx="51.5" cy="53" r="14.5" fill="#f4f6f4" />
      <path d="M45 45.5 C43 47.5 43.5 52 49 57 C54 62 58 62 60 59.5 L56 55.5 L53.5 57 C51.5 56 49 53.5 48 51 L49.5 49 Z" fill="#17b73a" />
    </g>
  );
}
function Pages() {
  return (
    <g>
      <path d="M8 20 L54 11 L61.5 64 L16 72.5 Z" fill="#fbfbfb" />
      <path d="M8 20 L52 11 L54 21 L9.5 29 Z" fill="#f5912a" />
      <text x="13" y="26" fontSize="8" fill="#fff" transform="rotate(-9 13 25)" fontFamily="Inter, sans-serif">PAGES</text>
      <path d="M15 33 L34 30 L37 47 L18 50 Z" fill="#2f9fe6" />
      <path d="M19 36 L32 34 L28 46 Z" fill="#f58a1c" />
      <path d="M38 29 L50 27 M38.5 32 L50 30 M39 35 L49 33 M39.5 38 L48 36.5 M40 41 L47 40 M18 53 L45 49 M18.5 56 L45 52 M19 61 L43 57 M19.5 64 L42 60 M20 67 L42 63" stroke="#8b8b8b" strokeWidth="1.1" />
      <path d="M54 11 C57 9.5 60 11 61 13 L48 55 L43 53 Z" fill="#f29b38" />
      <path d="M57 11 L61 13 L48 55 L46 54 Z" fill="#c86d15" />
      <path d="M44 52 L48.5 54 L44 67 L39.5 71.5 L40 65 Z" fill="#35373a" />
    </g>
  );
}
function Numbers() {
  const bars = [
    [15, 50, "#f4426a", "#d6213f"],
    [27, 36, "#fb9b2e", "#e8641c"],
    [39, 15, "#46d55a", "#1ea62f"],
    [50.5, 28, "#45b4f8", "#1a76ea"],
  ];
  return (
    <g>
      <path d="M7 46 H64 L66 70 H7 Z" fill="#f1f1f2" />
      <path d="M11 49 V68" stroke="#888" strokeWidth="1.8" strokeDasharray="1.8 3" />
      {bars.map(([x, y, a, b]) => (
        <g key={x}>
          <defs><Grad id={`nb${y}`} from={a} to={b} /></defs>
          <rect x={x} y={y - 3} width="10.5" height={67 - y} fill={`url(#nb${y})`} />
          <rect x={x} y={y - 3} width="10.5" height="2.5" fill="#fff" opacity="0.35" />
        </g>
      ))}
    </g>
  );
}
function Keynote() {
  return (
    <g>
      <defs><Grad id="kn" from="#1d8ef0" to="#2ba6f2" /></defs>
      <rect x="34" y="36" width="3.2" height="32" fill="#c9d3de" />
      <ellipse cx="35.5" cy="68" rx="13" ry="4.5" fill="#b4c4d6" />
      <ellipse cx="35.5" cy="67" rx="11" ry="3" fill="#dbe5ef" />
      <path d="M13.5 13 H57.5 L62 34 V37.5 H9 V34 Z" fill="url(#kn)" />
      <path d="M9 34 H62 V37.5 H9 Z" fill="#5cc0f5" />
      <path d="M20 16 H51 L53 32 H18 Z" fill="#fbfbfd" />
      <text x="35.5" y="20.5" fontSize="4.5" fill="#333" textAnchor="middle" fontFamily="Inter, sans-serif">KEYNOTE</text>
      <circle cx="29" cy="26" r="5.5" fill="#46b7e8" />
      <path d="M29 26 V20.5 A5.5 5.5 0 0 1 34.5 26 Z" fill="#f0637b" />
      <path d="M29 26 H34.5 A5.5 5.5 0 0 1 26 30.5 Z" fill="#7ccf3c" />
      <path d="M38 23 H47 M38 26 H47 M38 29 H47" stroke="#bbb" strokeWidth="0.9" />
    </g>
  );
}
function ITunes() {
  return (
    <g>
      <defs>
        <linearGradient id="it" x1="0.7" y1="0" x2="0.4" y2="1">
          <stop offset="0" stopColor="#fb4a6c" />
          <stop offset="0.5" stopColor="#c65be0" />
          <stop offset="1" stopColor="#22b8f5" />
        </linearGradient>
        <linearGradient id="itn" gradientUnits="userSpaceOnUse" x1="45" y1="22" x2="30" y2="62">
          <stop offset="0" stopColor="#fb4768" />
          <stop offset="0.5" stopColor="#c65be0" />
          <stop offset="1" stopColor="#6a5cf2" />
        </linearGradient>
      </defs>
      <circle cx="36.5" cy="42" r="30" fill="url(#it)" />
      <circle cx="36.5" cy="42" r="27" fill="#f6f5f9" />
      <path d="M30 28 L50 23.5 V51 C50 57 40 58 40 52.5 C40 48 45 48 47 47 V33 L33 36 V55 C33 62 22 62.5 22 56.5 C22 51 28 52 30 50.5 Z" fill="url(#itn)" />
    </g>
  );
}
function IBooks() {
  return (
    <Disc id="ib" from="#fdb42a" to="#e2481c">
      <path d="M36.5 32 C32 27 23 26.5 18.5 30 V54 C24 51 32 52 36.5 57.5 C41 52 49 51 54.5 54 V30 C50 26.5 41 27 36.5 32 Z" fill="#f6f1ec" />
      <path d="M36.5 32 V57" stroke="#ddb28c" strokeWidth="1.2" />
    </Disc>
  );
}
function AppStore() {
  return (
    <Disc id="as" from="#23c2fb" to="#1a63ee">
      <path d="M16.5 42 H57" stroke="#f4f8fd" strokeWidth="4.5" />
      <path d="M34 24 L39 22.5 L54 50 L55 57 L49.5 53.5 Z" fill="#f4f8fd" />
      <path d="M35 26 L42 30 L25 55 L18 58 L20 50 Z" fill="#f4f8fd" stroke="#2c8cf0" strokeWidth="0.9" />
    </Disc>
  );
}
function Prefs() {
  return (
    <g>
      <defs><Grad id="pf" from="#d5e6f0" to="#7d7c7a" /></defs>
      <rect x="6.5" y="14.5" width="58.5" height="54.5" rx="2" fill="url(#pf)" />
      <circle cx="36" cy="42" r="24" fill="#343434" />
      <circle cx="36" cy="42" r="19.5" fill="none" stroke="#a3a3a3" strokeWidth="4" strokeDasharray="2.4 1.68" />
      <circle cx="36" cy="42" r="16" fill="none" stroke="#a7a7a7" strokeWidth="3.5" />
      <circle cx="36" cy="42" r="5" fill="#9d9d9d" />
      <path d="M36 42 L28 28 M36 42 H52 M36 42 L28 56" stroke="#a7a7a7" strokeWidth="3.2" />
      <circle cx="36" cy="42" r="2" fill="#555" />
    </g>
  );
}
function Terminal() {
  return (
    <g>
      <rect x="6" y="16" width="59" height="51.5" rx="2.5" fill="#a8b2b4" />
      <rect x="8" y="18" width="55" height="47.5" rx="1" fill="#0c0c0c" />
      <rect x="9.5" y="19.5" width="52" height="44" fill="#303030" />
      <path d="M13 25 L19.5 28.5 L13 32" stroke="#fff" strokeWidth="2" fill="none" />
      <path d="M21.5 34 H30" stroke="#fff" strokeWidth="1.8" />
    </g>
  );
}
function ChromeIcon() {
  return (
    <g>
      <circle cx="36" cy="42" r="31" fill="#fdcd4b" />
      <path d="M9.2 26.5 A31 31 0 0 1 63.5 28 H36 L24 50 Z" fill="#dc4b40" />
      <path d="M9.2 26.5 A31 31 0 0 0 35 73 L48.5 49 A14 14 0 0 1 24 49.5 L10.5 26 Z" fill="#20a262" />
      <path d="M50 28 H63.8 A31 31 0 0 1 35 73 L48.5 49 Z" fill="#fdcd4b" />
      <circle cx="36" cy="42" r="14.2" fill="#f3f5f8" />
      <circle cx="36" cy="42" r="11.3" fill="#4c8bf0" />
    </g>
  );
}
function Studio() {
  return (
    <g>
      <circle cx="36.5" cy="39" r="28.5" fill="#7db544" />
      <path d="M8 39 A28.5 28.5 0 0 1 65 39 Z" fill="#86bc4c" />
      <path d="M41 24 L64 47 C61 57 53 65 42 67 L34 46 Z" fill="#6a9f38" opacity="0.6" />
      <path d="M30 40 L12.5 73.5 L14 75 L19.5 70.5 L36.5 46 L53.5 70.5 L59 75 L60 73.5 L43 40 Z" fill="#f3f3f3" />
      <path d="M36.5 49 L26.500 63 C32 66 41 66 46.500 63 Z" fill="#76ae40" />
      <path d="M22 53 C30 63 54 60 56.5 39" fill="none" stroke="#f3f3f3" strokeWidth="4.5" />
      <path d="M33 21 H40 V27 H43 L44.5 30 V41 L36.5 46 L28.5 41 V30 L30 27 H33 Z" fill="#565656" />
      <circle cx="36.5" cy="34.5" r="3.4" fill="#8ac24a" />
    </g>
  );
}
function Atom() {
  return (
    <Disc id="at" from="#a3df9b" to="#1fa56c">
      <g fill="none" stroke="#eefaf0" strokeWidth="1.5">
        <ellipse cx="36.5" cy="42" rx="6.5" ry="18.500" transform="rotate(-22 36.5 42)" />
        <ellipse cx="36.5" cy="42" rx="6.5" ry="18.500" transform="rotate(34 36.5 42)" />
        <ellipse cx="36.5" cy="42" rx="6.5" ry="18.500" transform="rotate(96 36.5 42)" />
        <circle cx="36.5" cy="42" r="2.300" fill="#fff" stroke="none" />
      </g>
    </Disc>
  );
}
function Brackets() {
  return (
    <g>
      <rect x="5" y="14" width="61" height="59" rx="8" fill="#0f5f9c" />
      <rect x="5" y="12" width="61" height="55" rx="8" fill="#20a7e2" />
      <rect x="11" y="18" width="49" height="43" rx="4.5" fill="#fcfcfc" />
      <path d="M16 23.5 H33.5 V30 H23.5 V49 H33.5 V55.5 H16 Z M38 23.5 H55 V55.5 H38 V49 H47.5 V30 H38 Z" fill="#474747" />
    </g>
  );
}
function Docs() {
  return (
    <g>
      <path d="M20 10 L52 9 L53 18 H18 Z" fill="#f6f6f8" />
      <path d="M19 11 H24 V14 H18 Z" fill="#333" />
      <path d="M12 14 H61 L64 18 V72 C64 73.5 63.5 74 62 74 H10 C8.5 74 8 73.5 8 72 V18 Z" fill="#ededed" />
      <rect x="11" y="25.5" width="51" height="38.5" fill="#8d9290" />
      <rect x="12.5" y="28" width="48" height="34.5" fill="#d3d3d2" />
      <g fontFamily="Liberation Serif, serif" fontSize="4" fontWeight="bold" fill="#d0544a">
        <text x="15.5" y="40.5" textLength="28">ASSESSING MODEL</text>
        <text x="15.5" y="45" textLength="17">ACCURACY</text>
      </g>
      <path d="M16 48.5 H29" stroke="#999" strokeWidth="1" />
    </g>
  );
}
function MiniBrackets() {
  return (
    <g>
      <rect x="6" y="19" width="64" height="46" fill="#f9fafb" />
      <rect x="6" y="19" width="13" height="46" fill="#3b3f42" />
      <rect x="67" y="19" width="3" height="46" fill="#3b3f42" />
      <rect x="6" y="19" width="64" height="1.8" fill="#4a4d50" />
      <path d="M22 23 H34 M24 26 H30 M26 33 H36 M26 35.5 H42 M26 37.5 H33" stroke="#aab8dc" strokeWidth="0.9" />
      <path d="M26 31 H38 M28 29 H34" stroke="#f0b070" strokeWidth="0.9" />
      <path d="M8 24 H15 M8 28 H13 M8 32 H15 M8 36 H12 M8 40 H14 M8 46 H13 M8 50 H15 M8 54 H12" stroke="#777" strokeWidth="0.8" />
      <g transform="translate(44.5 46.5) scale(0.38)"><Brackets /></g>
    </g>
  );
}
function MiniStudio({ alt }) {
  return (
    <g>
      <rect x="5" y="24" width="64" height="36" fill="#fbfbfc" />
      <rect x="5" y="24" width="64" height="2.8" fill="#dedfe1" />
      <rect x="5" y="27" width="18" height={alt ? 21 : 31} fill="#f1f1ee" />
      <path d="M7 30 H17 M8 32 H20 M8 34 H19 M7 36 H16" stroke="#9fb08a" strokeWidth="0.9" />
      {alt ? (
        <path d="M29 30 H45 M31 33 H48 M31 36 H46 M31 39 H50 M31 42 H47 M6 50 H46 M6 53 H52 M6 56 H44" stroke="#7d7fc0" strokeWidth="0.9" />
      ) : (
        <path d="M26 30 H48 M28 33 H44 M28 36 H50 M26 39 H40 M26 46 H52 M28 49 H46 M30 52 H48 M26 56 H52" stroke="#8a84a8" strokeWidth="0.9" />
      )}
      {!alt && <rect x="24" y="41" width="45" height="2.3" fill="#2d56a5" />}
      <path d="M5 59.2 H69" stroke="#8f8f8f" strokeWidth="1" />
      <g transform="translate(43 46.5) scale(0.38)"><Studio /></g>
    </g>
  );
}
function MiniNode() {
  return (
    <g>
      <rect x="3" y="20" width="67.5" height="44.5" rx="3" fill="#c9b5b2" />
      <rect x="4" y="21" width="65.5" height="42.5" rx="2" fill="#000" />
      <rect x="7" y="24" width="59.5" height="36.5" fill="#fff" />
      {[26, 28.5, 31, 33.5, 36, 38.5, 41, 43.5, 51, 53.5, 56, 58.5].map((y, i) => (
        <path key={y} d={`M8 ${y} H${i % 2 ? 38 : 31}`} stroke="#777" strokeWidth="1.1" strokeDasharray="5 0.8" />
      ))}
      <path d="M8 46 H34 M8 48.3 H24" stroke="#8ce08c" strokeWidth="1.1" />
      <rect x="18.5" y="63.5" width="52" height="12.500" rx="6" fill="#6b4644" />
      <text x="44" y="73" fontSize="13" fill="#fff" textAnchor="middle" fontFamily="Inter, sans-serif" textLength="40">node ...</text>
    </g>
  );
}
function MiniAtom() {
  return (
    <g>
      <rect x="5.5" y="24" width="64" height="36" fill="#272b35" />
      <rect x="5.5" y="24" width="64" height="1.5" fill="#dadada" />
      <path d="M18 29 H26 M18 33 H30 M24 41 H34 M24 44 H44 M28 47 H52 M24 52 H44" stroke="#8d5a55" strokeWidth="0.8" />
      <path d="M20 31 H36 M26 49 H48 M24 55 H36" stroke="#5f7a55" strokeWidth="0.8" />
      <g transform="translate(43.5 46.5) scale(0.38)"><Atom /></g>
    </g>
  );
}
function Trash() {
  return (
    <g>
      <defs>
        <linearGradient id="tr" x1="0" x2="1">
          <stop offset="0" stopColor="#d0cfcf" />
          <stop offset="0.3" stopColor="#eceae9" />
          <stop offset="0.75" stopColor="#dfdddb" />
          <stop offset="1" stopColor="#b8b7b7" />
        </linearGradient>
      </defs>
      <path d="M14 18 L22 12 L26 10 L32 13 L38 9.5 L46 12 L54 14 L59 18 L50 24 H22 Z" fill="#e9e9e9" />
      <path d="M17 20 L24 12 L29 17 L27 23 Z M36 12 L43 22 L38 23 Z M47 14 L54 20 L48 22 Z" fill="#4a4443" />
      <path d="M26 17 L33 15 L34 21 L28 22 Z" fill="#42c4b8" />
      <path d="M40 19 L46 15 L47 22 Z" fill="#a86038" />
      <path d="M20 14 L25 11 L27 15 Z M30 12 L34 10 L35 15 Z M42 12 L46 12 L47 15 Z" fill="#fff" />
      <path d="M12 17 C12 14 20 12 24 12 M50 12 C56 13 61 15 61 17" fill="none" stroke="#dcdcdc" strokeWidth="1.5" />
      <path d="M12 17 C17 23 30 24 36.5 24 C44 24 57 23 61 17 L56 67 C53 74 20 74 17 67 Z" fill="url(#tr)" />
      <path d="M20 30 L30 36 L42 30 L54 35 M22 46 L34 42 L50 50 M26 60 L40 56" fill="none" stroke="#d3d1cf" strokeWidth="1.2" />
    </g>
  );
}

const apps = [
  [Finder, true], [Siri], [Launchpad], [Safari], [Mail], [Contacts], [CalendarIcon], [Notes], [Reminders], [Maps],
  [Photos], [Messages, true], [FaceTime], [Pages], [Numbers], [Keynote], [ITunes, true], [IBooks], [AppStore], [Prefs],
  [Terminal, true], [ChromeIcon, true], [Studio, true], [Atom, true], [TeamViewerShape, true], [Brackets, true],
];
const rightSide = [Docs, MiniBrackets, MiniStudio, () => <MiniStudio alt />, MiniNode, MiniAtom, Trash];

function Slot({ Icon, running }) {
  return (
    <svg className="mr-[-0.05px] h-[90px] w-[73px] shrink-0" viewBox="0 0 73 90">
      <Icon />
      {running && <circle cx="36.5" cy="82" r="4" fill="#0b0508" />}
    </svg>
  );
}

function Dock() {
  return (
    <nav className="ml-[54px] flex h-[90px] w-[2452px] rounded-t-[10px] bg-[linear-gradient(90deg,#5c5556_0%,#5a5354_16%,#66585a_24%,#5e5556_30%,#665b60_42%,#5e5658_49%,#5c5a62_52%,#60677a_57%,#66697a_62%,#6c7892_68%,#75707f_72%,#996a68_75%,#c4705a_78%,#dc7653_82%,#b97060_87%,#97696a_92%,#7d6b7b_96%,#6b7090_100%)] pl-[5px]">
      {apps.map(([Icon, running], i) => (
        <Slot key={i} Icon={Icon} running={running} />
      ))}
      <i className="mt-[12px] mr-[13px] ml-[16px] h-[66px] w-[2px] shrink-0 bg-[#9c4a34]" />
      {rightSide.map((Icon, i) => (
        <Slot key={i} Icon={Icon} />
      ))}
    </nav>
  );
}

/* ---------- desktop ---------- */

function Desktop() {
  return (
    <div className="absolute inset-0">
      <div className="h-[1506px] bg-[linear-gradient(180deg,#4d4f78_0,#56587c_44px,#7d7690_72px,#15171b_300px)]" />
      <div className="h-[94px] bg-[linear-gradient(90deg,#0c0a0a_0%,#100e0f_55%,#1a2029_62%,#20232c_72%,#5c2c1c_80%,#4a2a20_85%,#20242e_88%,#1a1f2a_100%)]" />
      <svg className="absolute bottom-0 left-0 h-[94px] w-[70px]" viewBox="0 0 70 94">
        <defs>
          <linearGradient id="rk" x1="0" y1="0" x2="1" y2="0.6">
            <stop offset="0" stopColor="#2b2322" />
            <stop offset="1" stopColor="#181211" />
          </linearGradient>
        </defs>
        <path d="M0 14 C10 10 20 16 30 24 L52 28 L70 94 H0 Z" fill="url(#rk)" />
        <path d="M0 44 C16 38 38 44 50 56 L54 94 H0 Z" fill="#2c2322" />
        <path d="M0 44 C16 38 38 44 50 56 L52 62 C36 50 16 46 0 50 Z" fill="#1a1413" />
      </svg>
      <svg className="absolute right-0 bottom-0 h-[94px] w-[54px]" viewBox="0 0 54 94">
        <rect width="54" height="94" fill="#14161d" />
        <path d="M6 14 L12 12 L14 24 L8 26 Z M38 36 L46 34 L48 50 L42 54 Z M20 60 L26 58 L27 74 L22 76 Z M4 70 L8 68 L9 82 L5 84 Z M40 72 L48 70 L49 84 L42 86 Z" fill="#3b4356" />
        <path d="M16 30 L22 26 L24 44 L20 48 Z M44 10 L52 8 L53 26 L46 28 Z M30 62 L36 58 L35 80 L31 84 Z M8 42 L14 38 L14 54 L10 58 Z M26 18 L32 12 L33 30 L28 34 Z" fill="#262c3a" />
      </svg>
      <div className="absolute top-[72px] right-0 left-0 h-[1434px] rounded-[10px] bg-[linear-gradient(180deg,#e6e4e4_0,#dcdadb_44px,#1b1e23_44px,#1b1e23_300px,#15171a_1400px)]" />
    </div>
  );
}

export default function App() {
  return (
    <div className="relative h-[1600px] w-[2560px] overflow-hidden bg-black font-['Inter',sans-serif]">
      <Desktop />
      <div className="relative">
        <MenuBar />
        <div className="h-[1448px] w-[2542px] rounded-[12px] shadow-[0_10px_24px_rgba(0,0,0,0.45)]">
          <TabStrip />
          <Toolbar />
          <Page />
        </div>
        <div className="h-[16px]" />
        <Dock />
      </div>
    </div>
  );
}
